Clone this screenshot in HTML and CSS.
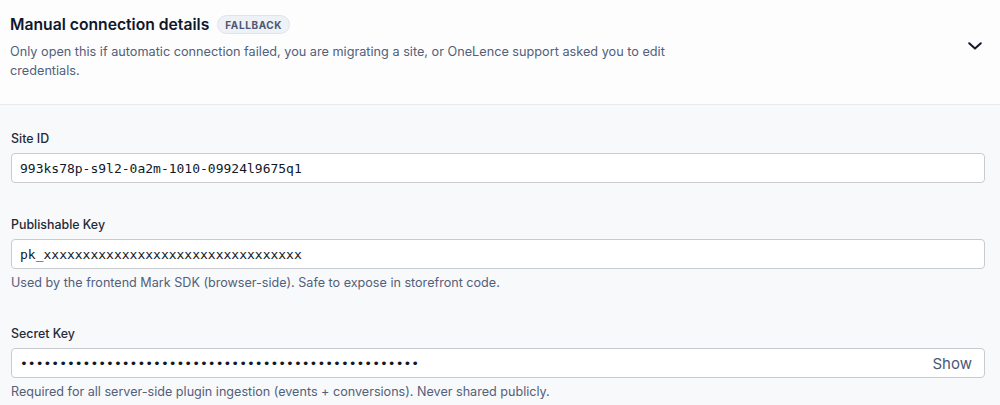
FILE: index.html
```html
<!DOCTYPE html>
<html lang="en">
<head>
<meta charset="utf-8">
<title>Manual connection details</title>
<link rel="stylesheet" href="styles.css">
</head>
<body>
<section class="panel">
  <header class="panel-header">
    <div class="header-text">
      <div class="title-row">
        <h2 class="title">Manual connection details</h2>
        <span class="badge">FALLBACK</span>
      </div>
      <p class="desc">Only open this if automatic connection failed, you are migrating a site, or OneLence support asked you to edit credentials.</p>
    </div>
    <button class="toggle" type="button" aria-label="Expand">
      <svg width="14" height="8" viewBox="0 0 14 8" fill="none"><path d="M1.2 1.2 L7 6.6 L12.8 1.2" stroke="#111827" stroke-width="2" stroke-linecap="round" stroke-linejoin="round"/></svg>
    </button>
  </header>
  <div class="panel-body">
    <div class="field">
      <label class="label" for="site-id">Site ID</label>
      <input class="input" id="site-id" type="text" value="993ks78p-s9l2-0a2m-1010-09924l9675q1">
    </div>
    <div class="field">
      <label class="label" for="pk">Publishable Key</label>
      <input class="input" id="pk" type="text" value="pk_xxxxxxxxxxxxxxxxxxxxxxxxxxxxxxxxx">
      <p class="help">Used by the frontend Mark SDK (browser-side). Safe to expose in storefront code.</p>
    </div>
    <div class="field">
      <label class="label" for="sk">Secret Key</label>
      <div class="input-wrap">
        <input class="input input-secret" id="sk" type="password" value="sk_live_xxxxxxxxxxxxxxxxxxxxxxxxxxxxxxxxxxxxxxxxxxx">
        <button class="show-btn" type="button">Show</button>
      </div>
      <p class="help">Required for all server-side plugin ingestion (events + conversions). Never shared publicly.</p>
    </div>
  </div>
</section>
</body>
</html>
```
FILE: styles.css
```css
* { box-sizing: border-box; }
html, body { margin: 0; padding: 0; }
body {
  font-family: Inter, "Noto Sans", sans-serif;
  background: #f8f9fb;
  color: #111827;
}
.panel { width: 1000px; }
.panel-header {
  display: flex;
  align-items: flex-start;
  justify-content: space-between;
  height: 105px;
  padding: 11px 18px 0 10px;
  background: #fdfdfe;
  border-bottom: 1px solid #e8eaee;
}
.header-text { max-width: 720px; }
.title-row {
  display: flex;
  align-items: center;
  gap: 8px;
}
.title {
  margin: 0;
  font-size: 15.7px;
  font-weight: 600;
  line-height: 27px;
  color: #0f172a;
}
.badge {
  display: inline-flex;
  align-items: center;
  height: 19px;
  padding: 0 7px;
  border-radius: 10px;
  background: #eef1f5;
  border: 1px solid #e0e4ea;
  color: #4a5872;
  font-size: 10px;
  font-weight: 700;
  letter-spacing: 0.6px;
}
.desc {
  margin: 4px 0 0;
  font-size: 12.7px;
  line-height: 19px;
  color: #52607a;
}
.toggle {
  background: none;
  border: 0;
  padding: 0;
  display: flex;
  margin-top: 31px;
}
.panel-body {
  display: flex;
  flex-direction: column;
  gap: 32px;
  padding: 24px 15px 0 11px;
}
.field { display: flex; flex-direction: column; }
.label {
  font-size: 12.4px;
  line-height: 20px;
  font-weight: 500;
  color: #1f2937;
  margin-bottom: 4px;
}
.input {
  width: 100%;
  height: 30px;
  border: 1px solid #c8cbd0;
  border-radius: 4px;
  background: #fff;
  padding: 0 8px;
  font-family: "DejaVu Sans Mono", "Liberation Mono", monospace;
  font-size: 13px;
  color: #111827;
  outline: none;
}
.input-wrap { position: relative; }
.input-secret { padding-right: 64px; }
.show-btn {
  position: absolute;
  right: 13px;
  top: 0;
  height: 30px;
  background: none;
  border: 0;
  padding: 0;
  font-family: Inter, "Noto Sans", sans-serif;
  font-size: 15px;
  color: #4a5872;
}
.help {
  margin: 4px 0 0;
  font-size: 12.6px;
  line-height: 19px;
  color: #52607a;
}
```
